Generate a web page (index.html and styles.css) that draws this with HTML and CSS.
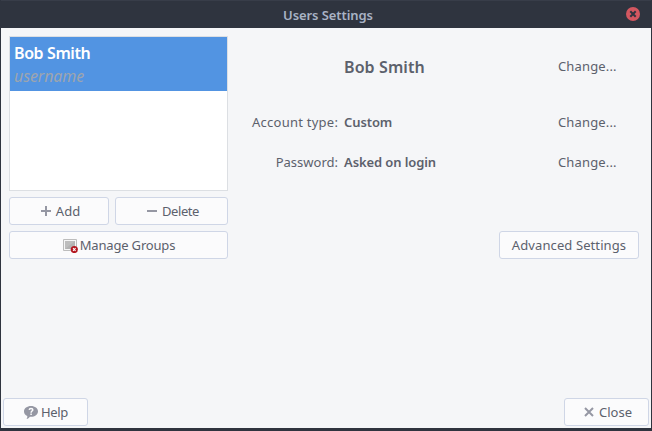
FILE: index.html
```html
<!DOCTYPE html>
<html lang="en">
<head>
<meta charset="utf-8">
<title>Users Settings</title>
<link rel="stylesheet" href="styles.css">
</head>
<body>
<div class="window">
  <header class="titlebar">
    <h1 class="title"><span>Users Settings</span></h1>
    <svg class="win-close" width="14" height="14" viewBox="0 0 14 14"><circle cx="7" cy="7" r="7" fill="#d35760"/><path d="M4.300 4.300l5.400 5.400M9.700 4.300l-5.400 5.400" stroke="#2f343f" stroke-width="2"/></svg>
  </header>
  <main class="content">
    <section class="sidebar">
      <div class="users">
        <div class="user">
          <div class="user-name"><span>Bob Smith</span></div>
          <div class="user-login"><span>username</span></div>
        </div>
      </div>
      <div class="actions">
        <button class="btn add"><svg width="10" height="10" viewBox="0 0 10 10"><path d="M0 5h10M5 0v10" stroke="#9597a3" stroke-width="2"/></svg><span>Add</span></button>
        <button class="btn delete"><svg width="10" height="10" viewBox="0 0 10 10"><path d="M0 5h10" stroke="#9597a3" stroke-width="2"/></svg><span>Delete</span></button>
      </div>
      <button class="btn groups"><svg width="16" height="16" viewBox="0 0 16 16"><path d="M1.500 2.500h13v11h-13z" fill="#f6f6f6" stroke="#bdbdbd"/><path d="M3 4h10v8H3z" fill="#b3b3b3"/><path d="M3 4h10L3 12z" fill="#bebebe"/><circle cx="12.300" cy="12.500" r="3.600" fill="#b3161f"/><path d="M11 11.200l2.600 2.600M13.600 11.200l-2.600 2.600" stroke="#fff" stroke-width="1.100"/></svg><span>Manage Groups</span></button>
    </section>
    <section class="details">
      <div class="row row-name"><span class="label"></span><strong class="value"><span>Bob Smith</span></strong><a class="change"><span>Change...</span></a></div>
      <div class="row row-type"><span class="label"><span>Account type:</span></span><strong class="value"><span>Custom</span></strong><a class="change"><span>Change...</span></a></div>
      <div class="row row-pass"><span class="label"><span>Password:</span></span><strong class="value"><span>Asked on login</span></strong><a class="change"><span>Change...</span></a></div>
      <button class="btn advanced"><span>Advanced Settings</span></button>
    </section>
  </main>
  <footer class="footer">
    <button class="btn help"><svg width="14" height="13" viewBox="0 0 14 13"><path d="M7 0c3.900 0 7 2.400 7 5.400s-3.100 5.400-7 5.400c-.4 0-.7 0-1.100-.1-.8 1.300-1.900 2-3.400 2.200.7-.8.9-1.800.8-2.900C1.300 9 0 7.300 0 5.400 0 2.400 3.100 0 7 0z" fill="#9597a3"/><path d="M5.200 3.900c.1-1 .8-1.500 1.800-1.500s1.800.5 1.800 1.400c0 1.200-1.700 1.300-1.700 2.900M7.100 7.500v1.500" fill="none" stroke="#fbfbfc" stroke-width="1.500"/></svg><span>Help</span></button>
    <button class="btn close"><svg width="10" height="10" viewBox="0 0 10 10"><path d="M1 1l8 8M9 1l-8 8" stroke="#9597a3" stroke-width="2"/></svg><span>Close</span></button>
  </footer>
</div>
</body>
</html>
```
FILE: styles.css
```css
* { box-sizing: border-box; }
body { margin: 0; }
.window {
  width: 652px;
  height: 431px;
  display: flex;
  flex-direction: column;
  border: solid #2f343f;
  border-width: 0 1px 3px;
  background: #f5f6f8;
  color: #5c616c;
  font: 13px/18px "Noto Sans", sans-serif;
  white-space: nowrap;
}
.titlebar {
  display: grid;
  grid-template-columns: 1fr auto 1fr;
  align-items: center;
  height: 28px;
  padding: 0 11px;
  background: #2f343f;
  border-top: 1px solid #383d49;
}
.title {
  grid-column: 2;
  margin: 1px 0 0 4px;
  font-size: 13px;
  font-weight: 600;
  letter-spacing: -0.08px;
  color: #a9b3c5;
}
.win-close { justify-self: end; margin-top: -1px; }
.content { flex: 1; display: flex; padding: 8px 12px 0 8px; }
.sidebar { width: 219px; }
.users {
  height: 155px;
  border: 1px solid #dcdfe3;
  background: #fff;
}
.user { height: 54px; padding: 5px 4px; background: #5294e2; }
.user-name {
  font-size: 16px;
  line-height: 23px;
  font-weight: 600;
  letter-spacing: -0.4px;
  color: #fff;
}
.user-login {
  font-size: 16px;
  line-height: 23px;
  font-style: italic;
  letter-spacing: -0.1px;
  color: #9ea5ae;
}
.actions { display: grid; grid-template-columns: 100px 113px; gap: 6px; margin: 6px 0; }
.btn {
  display: flex;
  align-items: center;
  justify-content: center;
  gap: 5px;
  height: 28px;
  padding: 0;
  border: 1px solid #cfd6e6;
  border-radius: 3px;
  background: #fbfbfc;
  color: #5c616c;
  font: inherit;
}
.add { padding-left: 3px; }
.delete { padding-left: 3px; letter-spacing: -0.4px; }
.groups { width: 219px; gap: 2px; letter-spacing: -0.18px; }
.details { flex: 1; padding-left: 24px; }
.row {
  display: grid;
  grid-template-columns: 86px 220px 1fr;
  align-items: center;
  height: 40px;
}
.row-name { height: 60px; margin-bottom: 6px; }
.row-name .value { font-size: 16px; letter-spacing: 0.1px; padding-top: 1px; }
.row-type .label { letter-spacing: 0.25px; }
.label { text-align: right; }
.value { padding-left: 6px; font-weight: 600; letter-spacing: -0.1px; }
.change { letter-spacing: 0.15px; }
.advanced { width: 140px; margin: 49px 0 0 auto; letter-spacing: 0.1px; }
.footer { display: flex; justify-content: space-between; padding: 0 2px 2px; }
.help, .close { width: 85px; padding-left: 3px; }
.help { padding-left: 1px; gap: 3px; letter-spacing: -0.3px; }
```
